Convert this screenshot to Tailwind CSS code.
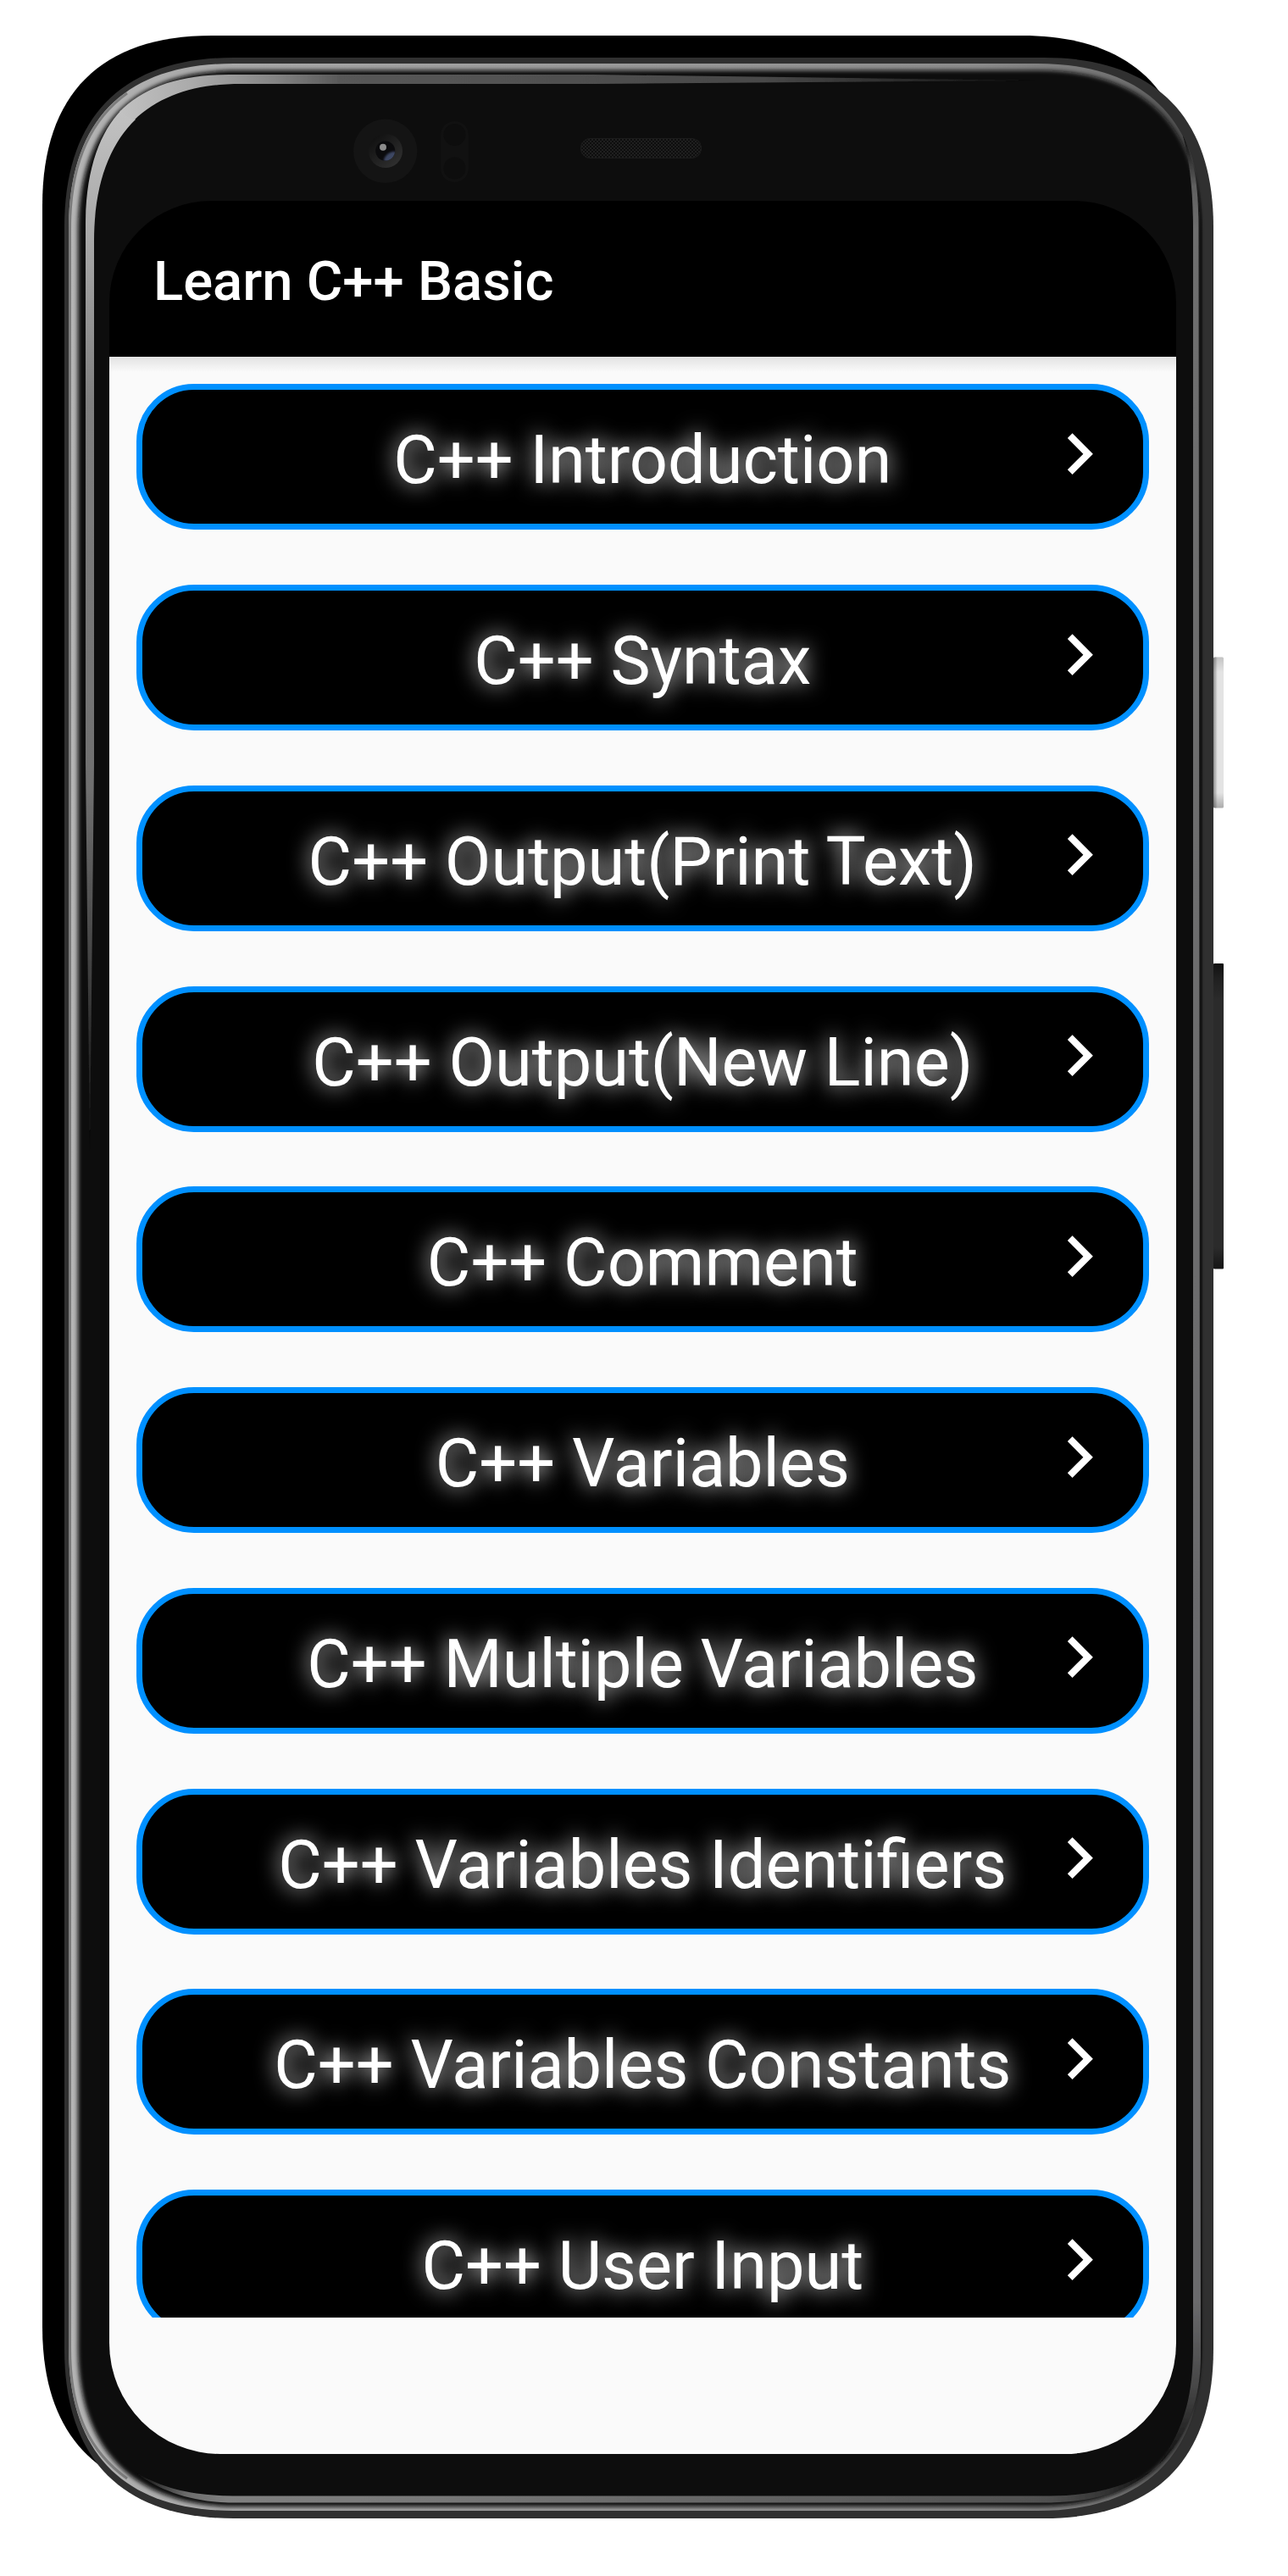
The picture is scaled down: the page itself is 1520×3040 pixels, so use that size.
<!DOCTYPE html>
<html lang="en">
<head>
<meta charset="utf-8">
<title>Learn C++ Basic</title>
<script src="https://cdn.jsdelivr.net/npm/@tailwindcss/browser@4"></script>
</head>
<body class="bg-white">
<main class="relative flex h-[3040px] w-[1520px] flex-col overflow-hidden bg-white pt-[237px] pl-[129px] font-[Roboto,sans-serif]">

  <!-- Device frame -->
  <svg class="absolute inset-0" width="1520" height="3040" viewBox="0 0 1520 3040" aria-hidden="true">
    <defs>
      <linearGradient id="rim" gradientUnits="userSpaceOnUse" x1="81" y1="0" x2="1419" y2="0">
        <stop offset="0" stop-color="#b4b4b4"/><stop offset=".13" stop-color="#a8a8a8"/><stop offset=".8" stop-color="#8c8c8c"/><stop offset=".93" stop-color="#707070"/><stop offset=".99" stop-color="#484848"/><stop offset="1" stop-color="#1c1c1c"/>
      </linearGradient>
      <linearGradient id="bandTop" gradientUnits="userSpaceOnUse" x1="140" y1="0" x2="1230" y2="0">
        <stop offset="0" stop-color="#c2c2c2"/><stop offset=".08" stop-color="#aaaaaa"/><stop offset=".17" stop-color="#848484"/><stop offset=".24" stop-color="#585858"/><stop offset=".7" stop-color="#484848"/><stop offset="1" stop-color="#0d0d0d"/>
      </linearGradient>
      <linearGradient id="bandLeft" gradientUnits="userSpaceOnUse" x1="0" y1="130" x2="0" y2="1360">
        <stop offset="0" stop-color="#c2c2c2"/><stop offset=".12" stop-color="#a8a8a8"/><stop offset=".28" stop-color="#808080"/><stop offset=".65" stop-color="#707070"/><stop offset=".8" stop-color="#484848"/><stop offset="1" stop-color="#0d0d0d"/>
      </linearGradient>
      <linearGradient id="bandRight" gradientUnits="userSpaceOnUse" x1="0" y1="160" x2="0" y2="2910">
        <stop offset="0" stop-color="#0d0d0d"/><stop offset=".022" stop-color="#606060"/><stop offset=".04" stop-color="#6e6e6e"/><stop offset=".93" stop-color="#6a6a6c"/><stop offset=".965" stop-color="#484848"/><stop offset="1" stop-color="#0d0d0d"/>
      </linearGradient>
      <linearGradient id="bandBottom" gradientUnits="userSpaceOnUse" x1="160" y1="0" x2="1360" y2="0">
        <stop offset="0" stop-color="#0d0d0d"/><stop offset=".05" stop-color="#6c6c6c"/><stop offset=".09" stop-color="#808080"/><stop offset=".3" stop-color="#787878"/><stop offset=".9" stop-color="#505050"/><stop offset=".95" stop-color="#363636"/><stop offset="1" stop-color="#0d0d0d"/>
      </linearGradient>
      <linearGradient id="power" x1="0" y1="0" x2="1" y2="0">
        <stop offset="0" stop-color="#8e8e8e"/><stop offset=".3" stop-color="#cdcdcd"/><stop offset=".4" stop-color="#e3e3e3"/><stop offset="1" stop-color="#e3e3e3"/>
      </linearGradient>
      <linearGradient id="powerEnds" x1="0" y1="0" x2="0" y2="1">
        <stop offset="0" stop-color="#000" stop-opacity=".14"/><stop offset=".1" stop-color="#000" stop-opacity="0"/><stop offset=".9" stop-color="#000" stop-opacity="0"/><stop offset="1" stop-color="#000" stop-opacity=".25"/>
      </linearGradient>
      <linearGradient id="volume" x1="0" y1="0" x2="0" y2="1">
        <stop offset="0" stop-color="#111"/><stop offset=".05" stop-color="#202020"/><stop offset=".12" stop-color="#2b2b2b"/><stop offset=".93" stop-color="#2b2b2b"/><stop offset="1" stop-color="#141414"/>
      </linearGradient>
      <linearGradient id="lensRing" x1=".1" y1=".1" x2=".8" y2=".9">
        <stop offset="0" stop-color="#101010"/><stop offset="1" stop-color="#2e2e2e"/>
      </linearGradient>
      <pattern id="mesh" width="4" height="4" patternUnits="userSpaceOnUse">
        <rect width="4" height="4" fill="#1f1f1f"/><rect width="2" height="2" fill="#0e0e0e"/><rect x="2" y="2" width="2" height="2" fill="#0e0e0e"/>
      </pattern>
      <clipPath id="lens"><circle cx="454.7" cy="178" r="11.5"/></clipPath>
      <filter id="soft3" x="-5%" y="-5%" width="110%" height="110%"><feGaussianBlur stdDeviation="2.6"/></filter>
      <filter id="soft1" x="-20%" y="-20%" width="140%" height="140%"><feGaussianBlur stdDeviation=".7"/></filter>
      <filter id="soft15" x="-60%" y="-60%" width="220%" height="220%"><feGaussianBlur stdDeviation="1.3"/></filter>
    </defs>

    <!-- Drop silhouette and body -->
    <path fill="#000" d="M50 242C50 111 119 42 250 42H1206C1337 42 1406 111 1406 242V2746C1406 2877 1337 2946 1206 2946H250C119 2946 50 2877 50 2746Z"/>
    <path fill="#303030" d="M76 268C76 137 145 68 276 68H1232C1363 68 1432 137 1432 268V2772C1432 2903 1363 2972 1232 2972H276C145 2972 76 2903 76 2772Z"/>
    <path fill="url(#rim)" d="M81 270C81 142 147 75 276 75H1224C1352 75 1419 142 1419 270V2770C1419 2896 1352 2963 1224 2963H276C147 2963 81 2896 81 2770Z"/>
    <path fill="none" stroke="#7c7c7c" stroke-width="3" d="M82.500 270C82.500 190 108 140 150 110M82.500 270V2770C82.500 2850 108 2895 150 2925"/>
    <path fill="#0d0d0d" filter="url(#soft3)" d="M92 275C92 147 158 83 280 83H1224C1350 83 1416.500 147 1416.500 275V2770C1416.500 2892 1350 2958 1224 2958H280C158 2958 92 2892 92 2770Z"/>

    <!-- Inner edge reflections -->
    <g filter="url(#soft1)">
      <path fill="url(#bandLeft)" d="M106 1360L101 900V265C101 200 118 156 143 130L160 141C130 170 111 216 111 285V900Z"/>
      <path fill="url(#bandTop)" d="M141 132C168 104 210 88 270 88H700L1225 95L700 99H285C230 99 190 112 158 142Z"/>
      <path fill="url(#bandRight)" d="M1396 160C1411 190 1414.500 225 1414.500 270L1417 2780C1417 2830 1402 2875 1368 2908C1396 2868 1408 2830 1408 2770V270C1408 225 1404 190 1396 160Z"/>
      <path fill="url(#bandBottom)" d="M160 2918C195 2938 230 2945 275 2945.500H1240C1290 2945 1325 2936 1360 2915C1330 2940 1295 2952 1240 2953.500H270C225 2952 190 2940 160 2918Z"/>
    </g>

    <!-- Side keys -->
    <rect x="1432" y="775.500" width="12" height="178" rx="1.500" fill="url(#power)"/>
    <rect x="1432" y="775.500" width="12" height="178" rx="1.500" fill="url(#powerEnds)"/>
    <rect x="1432" y="1137" width="12" height="360.500" rx="1" fill="url(#volume)"/>

    <!-- Camera -->
    <circle cx="454.700" cy="178.300" r="37.700" fill="#141414"/>
    <circle cx="455" cy="178" r="20" fill="url(#lensRing)"/>
    <circle cx="454.700" cy="178" r="11.500" fill="#0b0b0d"/>
    <g clip-path="url(#lens)">
      <ellipse cx="461" cy="186" rx="9" ry="5.500" transform="rotate(-38 461 186)" fill="#3e4664" filter="url(#soft15)"/>
    </g>
    <circle cx="452" cy="173.700" r="4" fill="#8c8c8c" filter="url(#soft1)"/>

    <!-- Proximity sensors -->
    <rect x="520" y="143" width="33" height="72" rx="16.500" fill="#111"/>
    <circle cx="536.500" cy="159" r="13" fill="#0d0d0d"/>
    <circle cx="536.500" cy="198.500" r="13" fill="#0d0d0d"/>

    <!-- Earpiece -->
    <rect x="685" y="163" width="143" height="24" rx="12" fill="url(#mesh)"/>
    <rect x="685.500" y="163.500" width="142" height="23" rx="11.500" fill="none" stroke="#1c1c1c"/>
  </svg>

  <!-- Screen -->
  <section class="relative h-[2659px] w-[1259px] overflow-hidden rounded-t-[120px] rounded-b-[131px] bg-[linear-gradient(#000_184px,#fafafa_184px)]">
    <header class="flex h-[184px] items-center pl-[52px]">
      <h1 class="pt-[6px] text-[65.200px] leading-[76px] font-medium whitespace-nowrap text-white">Learn C++ Basic</h1>
    </header>
    <div class="absolute inset-x-0 top-[184px] h-[18px] bg-linear-to-b from-[#e2e2e2] to-[#fafafa]"></div>
    <ul id="lessons" class="relative flex h-[2314px] flex-col gap-[64.740px] overflow-hidden pt-[32.400px] pl-[32px]"></ul>
  </section>
</main>

<template id="lesson">
  <li class="relative flex h-[172px] w-[1194.500px] shrink-0 items-center justify-center rounded-[68px] border-7 border-[#0090ff] bg-black">
    <span class="pt-[8px] text-[79.300px] leading-[94px] whitespace-nowrap text-white [text-shadow:0_0_26px_#fff]"></span>
    <svg class="absolute top-[26.500px] right-[26px]" width="97.300" height="97.300" viewBox="0 0 24 24" fill="#fff"><path d="M10 6 8.590 7.410 13.170 12l-4.580 4.590L10 18l6-6z"/></svg>
  </li>
</template>
<script>
  const lessons = [
    'C++ Introduction', 'C++ Syntax', 'C++ Output(Print Text)', 'C++ Output(New Line)', 'C++ Comment',
    'C++ Variables', 'C++ Multiple Variables', 'C++ Variables Identifiers', 'C++ Variables Constants', 'C++ User Input'
  ];
  const list = document.getElementById('lessons');
  const item = document.getElementById('lesson');
  lessons.forEach(name => {
    const node = item.content.cloneNode(true);
    node.querySelector('span').textContent = name;
    list.appendChild(node);
  });
</script>
</body>
</html>
